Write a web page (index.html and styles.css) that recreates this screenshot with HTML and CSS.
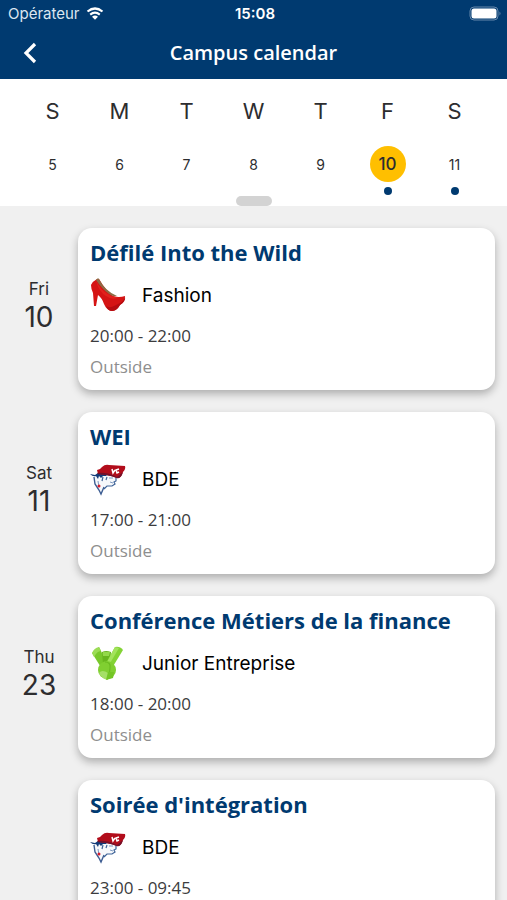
FILE: index.html
```html
<!DOCTYPE html>
<html lang="en">
<head>
  <meta charset="UTF-8" />
  <title>Campus calendar</title>
  <meta name="viewport" content="width=device-width, initial-scale=1.0" />
  <link rel="stylesheet" href="styles.css">
</head>
<body>
<svg class="sprite" aria-hidden="true">
  <symbol id="bde" viewBox="0 0 36 36">
    <path d="M4 15L6 22L11 31L14 26L21 25L25 21L27 15Z" fill="#f6f8fb"/>
    <path d="M0 13L5 14L8 12L14 12L17 15L13 15L11 17L9 15L8 18L6 15Q3 16 0 13Z" fill="#123a78"/>
    <path d="M4 16L5 23L9 29L11 33L14 26" fill="none" stroke="#3d5d92" stroke-width="1.4"/>
    <path d="M13 16L12 20M17 16L16 19M26 16L26 20L24 21L25 23L22 25L17 25L14 28" fill="none" stroke="#3d6297" stroke-width="1.2"/>
    <path d="M19 17L23 17M20 21L23 22M8 20L9 26" fill="none" stroke="#7d98be" stroke-width="1"/>
    <path d="M7 9Q10 9 12 6Q15 3 19 4L35 5Q36 8 33 11Q31 18 27 17Q22 15 16 14L8 13Z" fill="#b20d1b"/>
    <path d="M7 12Q17 11 27 16L33 11Q31 18 27 17Q22 15 16 14L8 13Z" fill="#72112a"/>
    <path d="M22 8L23 12L25 9M29 8L26 9L27 12L29 11" fill="none" stroke="#fff" stroke-width="1.5"/>
    <circle cx="9" cy="25" r="1.5" fill="#d51c2c"/>
  </symbol>
</svg>

<header>
  <div class="status">
    <div class="carrier">
      <span>Opérateur</span>
      <svg width="18" height="13" viewBox="0 0 18 13">
        <path d="M1.5 4.5Q9 -1.5 16.5 4.5M4.2 7.6Q9 3.8 13.8 7.6" fill="none" stroke="#fff" stroke-width="2.2"/>
        <path d="M6 9.7Q9 7.5 12 9.7L9 12.7Z" fill="#fff"/>
      </svg>
    </div>
    <span class="clock">15:08</span>
    <svg class="battery" width="33" height="15" viewBox="0 0 33 15">
      <rect x="1" y="1" width="28" height="13" rx="4" fill="none" stroke="#6788ab"/>
      <rect x="2.5" y="2.5" width="25" height="10" rx="2.5" fill="#fff"/>
      <path d="M30.5 5.5Q32.5 7.5 30.5 9.5Z" fill="#6788ab"/>
    </svg>
  </div>
  <div class="navbar">
    <button class="back" aria-label="Back">
      <svg width="14" height="22" viewBox="0 0 14 22"><path d="M12 2L3 11L12 20" fill="none" stroke="#fff" stroke-width="3.2"/></svg>
    </button>
    <h1>Campus calendar</h1>
  </div>
</header>

<section class="week">
  <div class="days">
    <div class="day"><span class="letter">S</span><button>5</button></div>
    <div class="day"><span class="letter">M</span><button>6</button></div>
    <div class="day"><span class="letter">T</span><button>7</button></div>
    <div class="day"><span class="letter">W</span><button>8</button></div>
    <div class="day"><span class="letter">T</span><button>9</button></div>
    <div class="day"><span class="letter">F</span><button class="selected">10</button><i class="dot"></i></div>
    <div class="day"><span class="letter">S</span><button>11</button><i class="dot"></i></div>
  </div>
  <button class="knob" aria-label="Expand calendar"></button>
</section>

<main>
  <div class="row">
    <div class="date"><span>Fri</span><strong>10</strong></div>
    <article class="card">
      <h2>Défilé Into the Wild</h2>
      <div class="club">
        <svg width="36" height="36" viewBox="0 0 36 36">
          <path d="M7 2Q3 4 1 8Q1 12 3 16L4 29H6L8 18Q12 21 14 27Q17 34 22 34Q27 33 30 28Q35 25 35 19Q29 21 23 19Q16 14 9 2Z" fill="#d51414"/>
          <path d="M6 3Q8 0 9 2Q15 14 27 19Q23 20 19 17Q12 12 6 3Z" fill="#8d6a43"/>
          <path d="M6 4Q11 13 18 17Q23 21 29 20Q23 24 16 19Q9 15 6 4Z" fill="#e2211c"/>
          <path d="M16 29Q20 32 28 27Q34 25 35 19Q36 25 30 28Q27 34 22 34Q18 34 16 29Z" fill="#b60c10"/>
        </svg>
        <span>Fashion</span>
      </div>
      <p class="time">20:00 - 22:00</p>
      <p class="place">Outside</p>
    </article>
  </div>

  <div class="row">
    <div class="date"><span>Sat</span><strong>11</strong></div>
    <article class="card">
      <h2>WEI</h2>
      <div class="club">
        <svg width="36" height="36"><use href="#bde"/></svg>
        <span>BDE</span>
      </div>
      <p class="time">17:00 - 21:00</p>
      <p class="place">Outside</p>
    </article>
  </div>

  <div class="row">
    <div class="date"><span>Thu</span><strong>23</strong></div>
    <article class="card">
      <h2>Conférence Métiers de la finance</h2>
      <div class="club">
        <svg width="36" height="36" viewBox="0 0 36 36">
          <path d="M2 8L9 2L17 18L12 24Z" fill="#78c82b"/>
          <path d="M2 8Q4 3 9 2L11 6Q7 6 4 12Z" fill="#9bdc55"/>
          <path d="M12 7Q16 5 21 7L20 19H13Z" fill="#67b51e"/>
          <path d="M13 7H20L19 11H13Z" fill="#93d94a"/>
          <path d="M25 2Q30 1 33 5L22 23L16 18Z" fill="#83d335"/>
          <path d="M25 2L29 3L19 20L17 17Z" fill="#a2e35c"/>
          <circle cx="17" cy="25" r="9" fill="#80cf31"/>
          <path d="M9 28Q12 24 18 28V35Q12 34 9 28Z" fill="#a5df67"/>
          <path d="M15 17Q21 17 20 23L19 31" fill="none" stroke="#6bbb22" stroke-width="1.2"/>
          <path d="M18 27H24L23 33L16 35Z" fill="#74c525"/>
        </svg>
        <span>Junior Entreprise</span>
      </div>
      <p class="time">18:00 - 20:00</p>
      <p class="place">Outside</p>
    </article>
  </div>

  <div class="row">
    <div class="date"></div>
    <article class="card">
      <h2>Soirée d'intégration</h2>
      <div class="club">
        <svg width="36" height="36"><use href="#bde"/></svg>
        <span>BDE</span>
      </div>
      <p class="time">23:00 - 09:45</p>
    </article>
  </div>
</main>
</body>
</html>
```
FILE: styles.css
```css
* {
  box-sizing: border-box;
}
body {
  margin: 0;
  height: 100vh;
  display: flex;
  flex-direction: column;
  overflow: hidden;
  background: #f0f0f0;
  color: #2d2d2f;
  font-family: Inter, "Liberation Sans", sans-serif;
}
h1, h2, p {
  margin: 0;
}
h1, h2, .time, .place {
  font-family: "Open Sans", "Noto Sans", sans-serif;
}
button {
  padding: 0;
  border: none;
  background: none;
  color: inherit;
  font-family: inherit;
  cursor: pointer;
}
svg {
  display: block;
  flex-shrink: 0;
}
.sprite {
  position: absolute;
  width: 0;
  height: 0;
}

/* top bar */
header {
  flex-shrink: 0;
  background: #003a70;
  color: #fff;
}
.status {
  display: grid;
  grid-template-columns: 1fr auto 1fr;
  align-items: center;
  height: 27px;
  padding: 0 5px 0 8px;
  font-size: 15px;
}
.carrier {
  display: flex;
  align-items: center;
  gap: 6px;
  color: #dce6f0;
}
.clock {
  font-weight: 600;
}
.battery {
  justify-self: end;
}
.navbar {
  display: grid;
  grid-template-columns: 60px 1fr 60px;
  align-items: center;
  height: 52px;
}
.back {
  display: flex;
  align-items: center;
  justify-content: center;
  height: 44px;
}
h1 {
  text-align: center;
  font-size: 20px;
  font-weight: 600;
  line-height: 28px;
}

/* week strip */
.week {
  flex-shrink: 0;
  display: flex;
  flex-direction: column;
  align-items: center;
  justify-content: space-between;
  height: 127px;
  padding-top: 18px;
  background: #fff;
}
.days {
  display: grid;
  grid-template-columns: repeat(7, 1fr);
  width: 100%;
  padding: 0 19px;
}
.day {
  display: flex;
  flex-direction: column;
  align-items: center;
}
.letter {
  font-size: 22px;
  line-height: 28px;
}
.day button {
  width: 36px;
  height: 36px;
  margin-top: 21px;
  border-radius: 50%;
  font-size: 14px;
}
.day .selected {
  background: #ffbf00;
  font-size: 17px;
  font-weight: 500;
}
.dot {
  width: 8px;
  height: 8px;
  margin-top: 5px;
  border-radius: 50%;
  background: #003a70;
}
.knob {
  width: 36px;
  height: 10px;
  border-radius: 5px;
  background: #d3d3d3;
}

/* agenda */
main {
  flex: 1;
  min-height: 0;
  overflow-y: auto;
  scrollbar-width: none;
  padding: 22px 12px 22px 0;
}
.row {
  display: grid;
  grid-template-columns: 78px 1fr;
  margin-bottom: 22px;
}
.date {
  display: flex;
  flex-direction: column;
  align-items: center;
  padding-top: 50px;
}
.date span {
  font-size: 17px;
  line-height: 22px;
}
.date strong {
  font-size: 28px;
  font-weight: 400;
  line-height: 34px;
}
.card {
  min-height: 162px;
  padding: 9px 12px 12px;
  border-radius: 14px;
  background: #fff;
  box-shadow: 0 4px 8px rgba(0, 0, 0, 0.28);
}
h2 {
  color: #003a70;
  font-size: 22px;
  font-weight: 700;
  line-height: 30px;
}
.club {
  display: flex;
  align-items: center;
  gap: 16px;
  margin-top: 10px;
  color: #000;
  font-size: 19px;
}
.time {
  margin-top: 12px;
  color: #3c3c3e;
  font-size: 17px;
  line-height: 22px;
}
.place {
  margin-top: 9px;
  color: #8e8e8e;
  font-size: 17px;
  line-height: 22px;
}
```
